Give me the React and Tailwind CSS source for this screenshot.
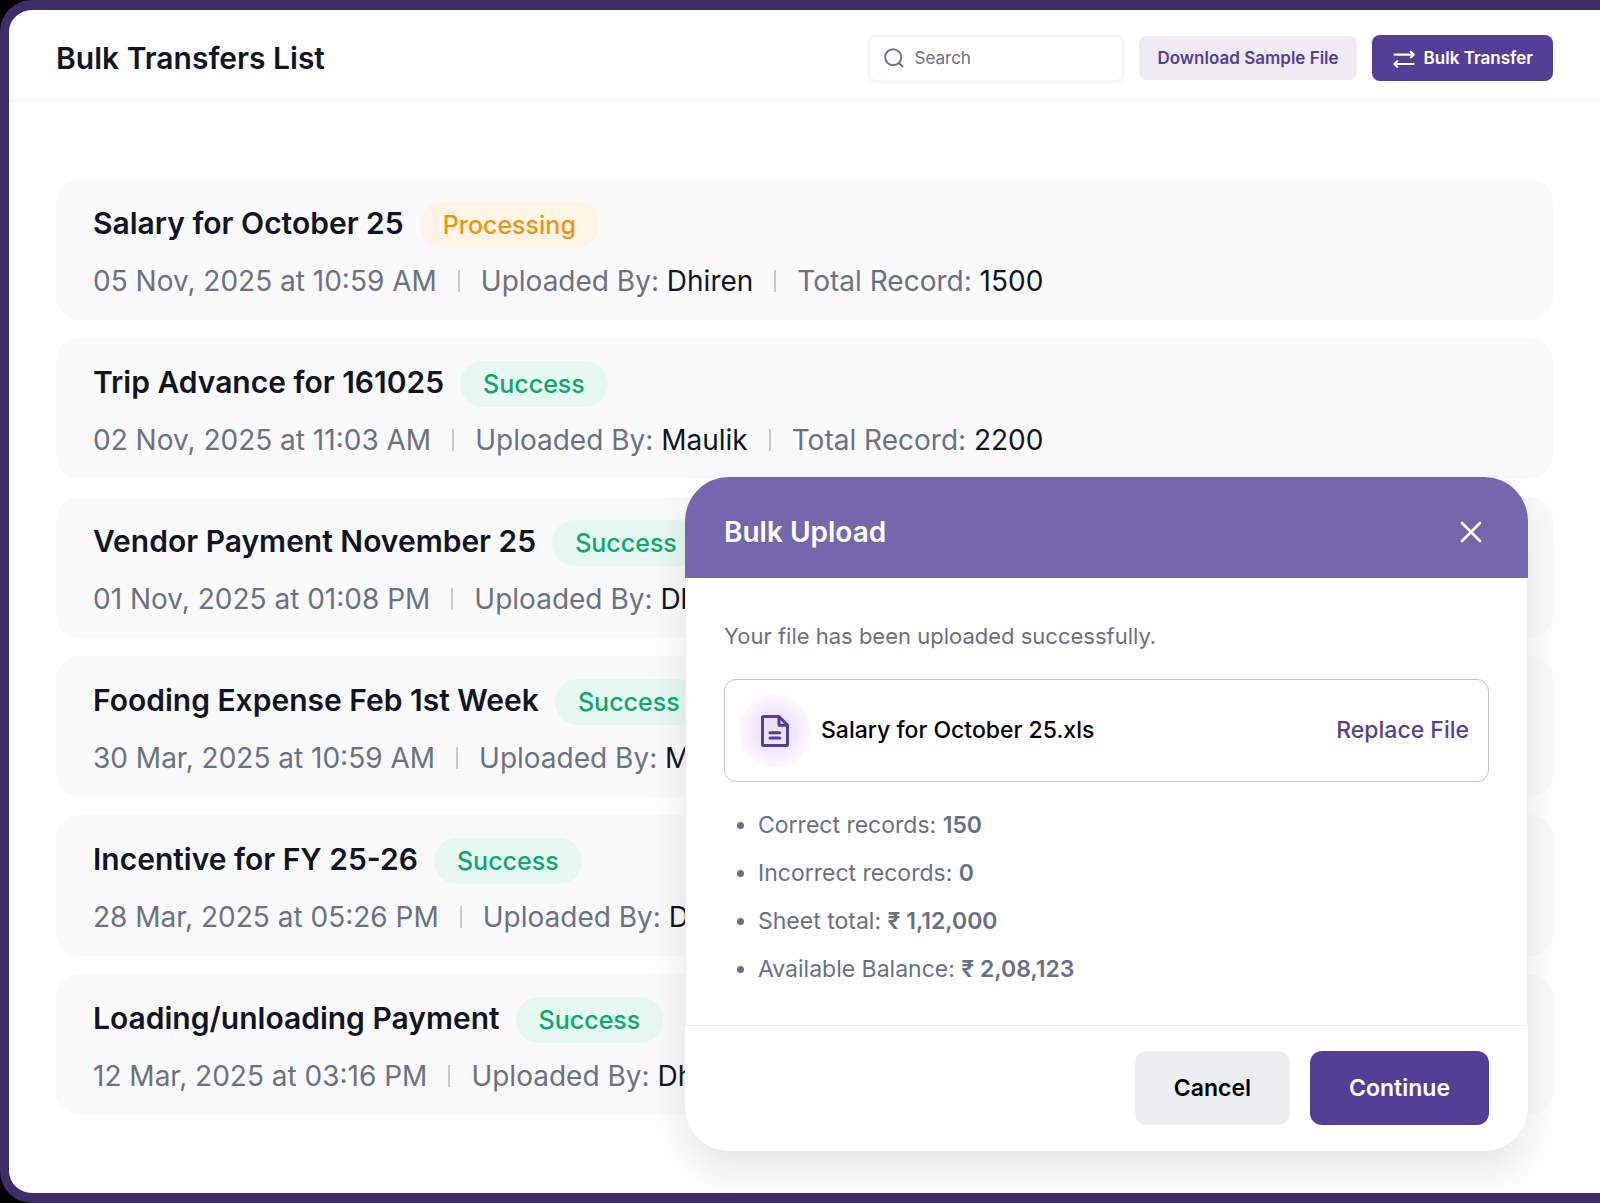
const transfers = [
  { title: "Salary for October 25", status: "Processing", date: "05 Nov, 2025 at 10:59 AM", uploadedBy: "Dhiren", total: 1500 },
  { title: "Trip Advance for 161025", status: "Success", date: "02 Nov, 2025 at 11:03 AM", uploadedBy: "Maulik", total: 2200 },
  { title: "Vendor Payment November 25", status: "Success", date: "01 Nov, 2025 at 01:08 PM", uploadedBy: "Dhiren", total: 1800 },
  { title: "Fooding Expense Feb 1st Week", status: "Success", date: "30 Mar, 2025 at 10:59 AM", uploadedBy: "Maulik", total: 1200 },
  { title: "Incentive for FY 25-26", status: "Success", date: "28 Mar, 2025 at 05:26 PM", uploadedBy: "Dhiren", total: 1500 },
  { title: "Loading/unloading Payment", status: "Success", date: "12 Mar, 2025 at 03:16 PM", uploadedBy: "Dhiren", total: 1100 },
];

const summary = [
  { label: "Correct records", value: "150" },
  { label: "Incorrect records", value: "0" },
  { label: "Sheet total", value: "₹ 1,12,000" },
  { label: "Available Balance", value: "₹ 2,08,123" },
];

const statusStyles = {
  Processing: "bg-[#fff4e6] text-[#f0930f]",
  Success: "bg-[#e6f8f1] text-[#0ca870]",
};

function SearchIcon() {
  return (
    <svg className="w-5 h-5 shrink-0" viewBox="0 0 20 20" fill="none" stroke="#6b7080" strokeWidth="1.9" strokeLinecap="round">
      <circle cx="9.2" cy="9.2" r="8" />
      <path d="M15 15l3.6 3.6" />
    </svg>
  );
}

function TransferIcon() {
  return (
    <svg className="w-6 h-5 shrink-0" viewBox="0 0 24 20" fill="none" stroke="currentColor" strokeWidth="2.2" strokeLinecap="round" strokeLinejoin="round">
      <path d="M2.5 5.6h19M18.8 2.8l2.8 2.8-2.8 2.8" />
      <path d="M21.5 15h-19M5.2 12.2L2.4 15l2.8 2.8" />
    </svg>
  );
}

function CloseIcon() {
  return (
    <svg className="w-6 h-6" viewBox="0 0 24 24" fill="none" stroke="currentColor" strokeWidth="2.6" strokeLinecap="round">
      <path d="M3 3l18 18M21 3L3 21" />
    </svg>
  );
}

function FileIcon() {
  return (
    <svg className="w-7 h-8" viewBox="0 0 28 32" fill="none" stroke="#553f96" strokeWidth="3" strokeLinecap="round" strokeLinejoin="round">
      <path d="M2.5 1.5h15.4l8.6 8.6v19.4a1 1 0 0 1-1 1h-23a1 1 0 0 1-1-1v-27a1 1 0 0 1 1-1z" />
      <path d="M18 2v8.2h8" />
      <path d="M9 17.8h9.8M9 23h9.8" />
    </svg>
  );
}

function TransferCard({ title, status, date, uploadedBy, total }) {
  return (
    <li className="bg-[#fafafa] rounded-3xl px-[37px] pt-[23px] h-[141px]">
      <div className="flex items-start gap-4">
        <h2 className="text-[30px] leading-[42px] font-semibold text-[#101525]">{title}</h2>
        <span className={`rounded-full px-[23px] text-[25px] leading-[46px] font-medium ${statusStyles[status]}`}>
          {status}
        </span>
      </div>
      <p className="flex items-center mt-[15px] text-[28px] leading-[36px] text-[#6b7183] whitespace-nowrap">
        <span>{date}</span>
        <span className="w-0.5 h-[22px] mx-[21px] bg-[#c9cbd2]" />
        <span>
          Uploaded By: <span className="text-[#101525]">{uploadedBy}</span>
        </span>
        <span className="w-0.5 h-[22px] mx-[21px] bg-[#c9cbd2]" />
        <span>
          Total Record: <span className="text-[#101525]">{total}</span>
        </span>
      </p>
    </li>
  );
}

function BulkUploadDialog() {
  return (
    <section
      role="dialog"
      aria-labelledby="bulk-upload-title"
      className="absolute right-[72px] bottom-[42px] w-[843px] rounded-[44px] overflow-hidden bg-white shadow-[0_20px_40px_rgba(0,0,0,0.10)]"
    >
      <header className="flex items-center justify-between h-[101px] pl-[39px] pr-[45px] pt-2 bg-[#7567ab] text-white">
        <h2 id="bulk-upload-title" className="text-[28px] leading-[36px] font-semibold">Bulk Upload</h2>
        <button type="button" aria-label="Close">
          <CloseIcon />
        </button>
      </header>

      <div className="px-[38px] pt-10 pb-8 border-x border-b border-[#ebebed] text-[23px] text-[#6b7080]">
        <p className="text-[22px] leading-[36px]">Your file has been uploaded successfully.</p>
        <div className="flex items-center mt-[25px] h-[103px] pl-[14px] pr-[19px] border border-[#c4c1d2] rounded-xl">
          <span className="flex items-center justify-center w-[72px] h-[72px] rounded-full bg-radial from-[#eedffd] from-20% to-[#fbf8ff] to-70%">
            <FileIcon />
          </span>
          <span className="ml-2.5 font-medium text-black">Salary for October 25.xls</span>
          <button type="button" className="ml-auto font-medium text-[#553f96]">Replace File</button>
        </div>
        <ul className="mt-[19px]">
          {summary.map((item) => (
            <li key={item.label} className="flex items-center gap-[14px] pl-[13px] leading-[48px]">
              <span className="w-[7px] h-[7px] rounded-full bg-[#6b7080]" />
              <span>
                {item.label}: <strong className="font-semibold">{item.value}</strong>
              </span>
            </li>
          ))}
        </ul>
      </div>

      <footer className="flex justify-end gap-5 px-[39px] pt-[25px] pb-[26px] text-[23px] font-semibold">
        <button type="button" className="h-[74px] px-[39px] rounded-xl bg-[#edeef0] text-black">Cancel</button>
        <button type="button" className="h-[74px] px-[39px] rounded-xl bg-[#553f96] text-white">Continue</button>
      </footer>
    </section>
  );
}

export default function App() {
  return (
    <div className="min-h-screen flex bg-black font-['Inter',sans-serif]">
      <main className="relative flex-1 rounded-l-[32px] bg-white border-[#3b2e69] border-y-10 border-l-[9px]">
        <header className="flex items-center justify-between h-[91px] px-[47px] pt-[6px] border-b border-[#f0f0f2]">
          <h1 className="text-[30px] leading-[36px] font-semibold text-[#101525]">Bulk Transfers List</h1>
          <div className="flex items-center gap-[15px] text-[17px]">
            <label className="flex items-center gap-2.5 w-64 h-[47px] px-[14px] bg-white border-2 border-[#f5f5f7] rounded-lg shadow-xs">
              <SearchIcon />
              <input
                type="search"
                aria-label="Search"
                placeholder="Search"
                className="w-full pt-0.5 outline-none placeholder:text-[#6b7080]"
              />
            </label>
            <button type="button" className="h-11 px-[18px] pt-0.5 rounded-lg bg-[#eeebf5] font-semibold text-[#553f96]">
              Download Sample File
            </button>
            <button type="button" className="flex items-center gap-2 h-[46px] px-5 pt-0.5 rounded-lg bg-[#553f96] font-semibold text-white">
              <TransferIcon />
              Bulk Transfer
            </button>
          </div>
        </header>

        <ul className="flex flex-col gap-[18px] px-[47px] pt-[78px] pb-[76px]">
          {transfers.map((transfer) => (
            <TransferCard key={transfer.title} {...transfer} />
          ))}
        </ul>

        <BulkUploadDialog />
      </main>
    </div>
  );
}
